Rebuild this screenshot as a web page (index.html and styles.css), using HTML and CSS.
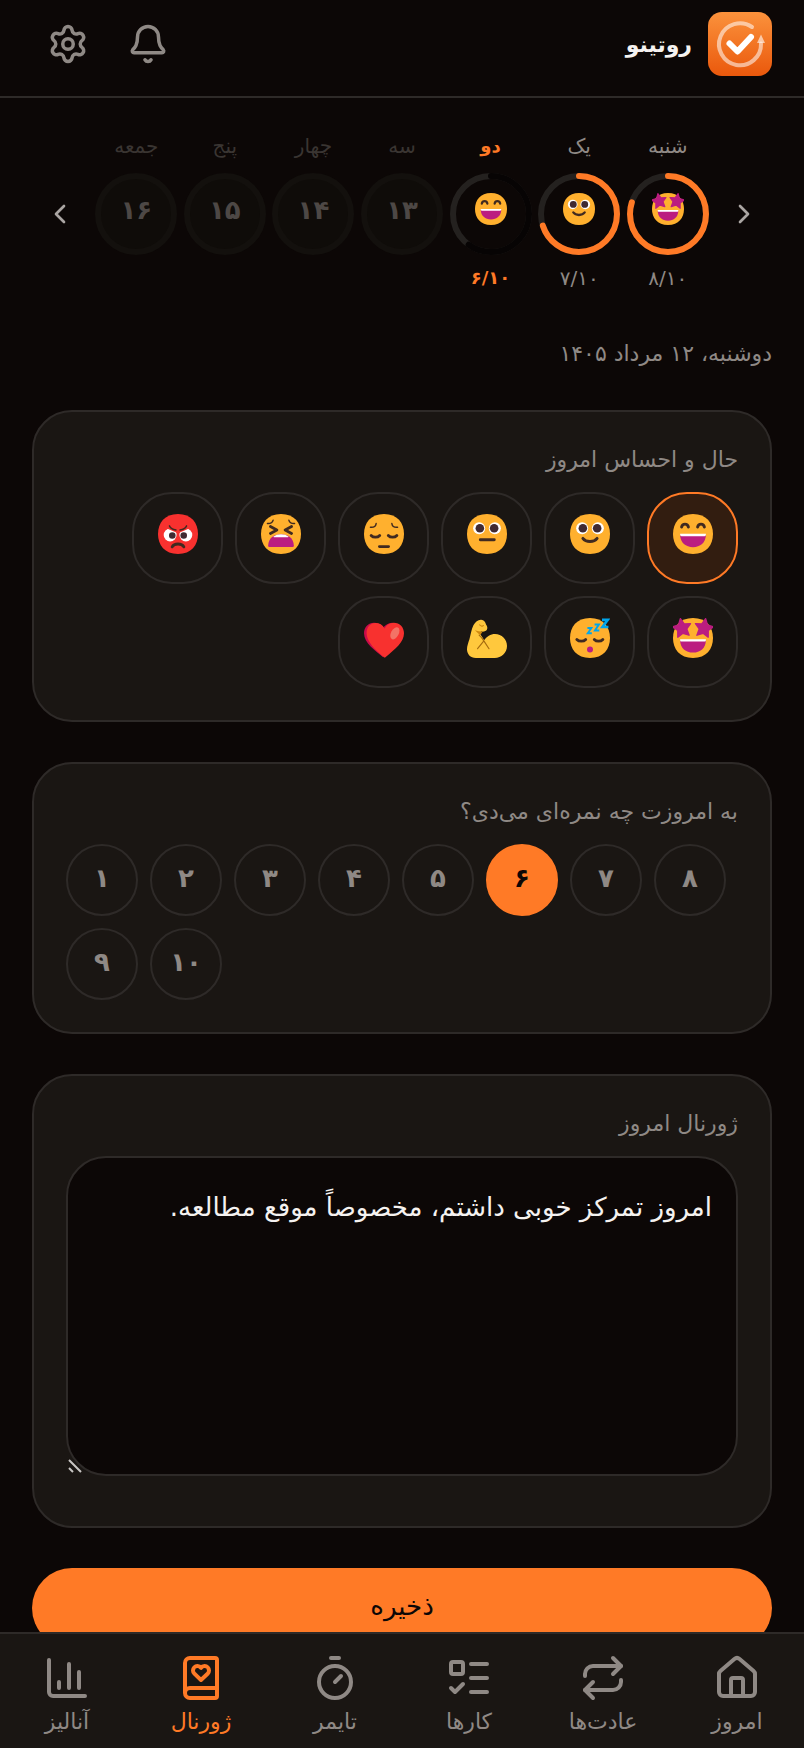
FILE: index.html
```html
<!DOCTYPE html>
<html lang="fa" dir="rtl">
<head>
<meta charset="utf-8">
<meta name="viewport" content="width=device-width, initial-scale=1">
<title>روتینو</title>
<link rel="stylesheet" href="styles.css">
</head>
<body>
<svg class="defs" aria-hidden="true">
  <defs>
    <path id="face" d="M16 30c9.330 0 14-6.270 14-14S25.330 2 16 2 2 8.270 2 16s4.660 14 14 14Z"/>
    <path id="star" d="M0-6.600 2-2.500 6.400-2 3.200 1.200 4 5.800 0 3.700-4 5.800-3.200 1.200-6.400-2-2-2.500Z" stroke="#bb1d80" stroke-linejoin="round"/>
    <g id="eyes-open">
      <circle cx="10.500" cy="12" r="4.200" fill="#fff"/><circle cx="21.500" cy="12" r="4.200" fill="#fff"/>
      <circle cx="11" cy="12" r="3" fill="#402a32"/><circle cx="21" cy="12" r="3" fill="#402a32"/>
    </g>
    <g id="laugh">
      <path fill="#bb1d80" d="M7 16.500h18c0 5.500-4 8.700-9 8.700s-9-3.200-9-8.700Z"/>
      <path fill="#fff" d="M7 15.900h18v.6c0 .6-.3 1-.9 1H7.900c-.6 0-.9-.4-.9-1Z"/>
    </g>
    <symbol id="e-grin" viewBox="2 2 28 28">
      <use href="#face" fill="#ffb02e"/>
      <path class="ink" d="M8 11.200c.6-2.800 4.200-2.800 4.800 0M19.200 11.200c.6-2.800 4.200-2.800 4.800 0"/>
      <use href="#laugh"/>
    </symbol>
    <symbol id="e-smile" viewBox="2 2 28 28">
      <use href="#face" fill="#ffb02e"/><use href="#eyes-open"/>
      <path class="ink" d="M11 19c2.200 3 7.800 3 10 0"/>
    </symbol>
    <symbol id="e-neutral" viewBox="2 2 28 28">
      <use href="#face" fill="#ffb02e"/><use href="#eyes-open"/>
      <path class="ink" d="M11.300 20h9.800"/>
    </symbol>
    <symbol id="e-pensive" viewBox="2 2 28 28">
      <use href="#face" fill="#ffb02e"/>
      <path class="ink thin" d="M6.500 11.300c2 .2 3.700-.8 4-2.600M25.500 11.300c-2 .2-3.700-.8-4-2.600"/>
      <path class="ink" d="M7 17c1.500 1.600 4.500 1.600 6 0M19 17c1.500 1.600 4.500 1.600 6 0M12.800 24.800h6.400"/>
    </symbol>
    <symbol id="e-tired" viewBox="2 2 28 28">
      <use href="#face" fill="#ffb02e"/>
      <path class="ink thin" d="M6.500 8.700c2 .1 3.600-.8 4-2.400M25.500 8.700c-2 .1-3.600-.8-4-2.400"/>
      <path class="ink" d="m8.600 10.800 4.500 2.400-4.500 2.400M23.400 10.800l-4.500 2.400 4.500 2.400"/>
      <path fill="#bb1d80" d="M7 24c.4-5.300 4-7.800 9-7.800s8.600 2.500 9 7.800c0 .8-.4 1.100-1 1.100H8c-.6 0-1-.3-1-1.100Z"/>
      <path fill="#fff" d="M10.600 17.900C12 16.800 14 16.200 16 16.200s4 .6 5.400 1.700c-.3.300-.6.400-1 .4h-8.800c-.4 0-.7-.1-1-.4Z"/>
    </symbol>
    <symbol id="e-angry" viewBox="2 2 28 28">
      <use href="#face" fill="#f8312f"/>
      <circle cx="10.500" cy="16.700" r="4.500" fill="#fff"/><circle cx="21.500" cy="16.700" r="4.500" fill="#fff"/>
      <path fill="#f8312f" d="m9 10 7 3.500 7-3.500v2.500L16 15.500 9 12.500Z"/>
      <circle cx="12" cy="17" r="2.300" fill="#402a32"/><circle cx="20" cy="17" r="2.300" fill="#402a32"/>
      <path class="ink thin" d="M10 10.300c.8 1.800 2.200 2.600 4.600 2.900M22 10.300c-.8 1.800-2.200 2.600-4.600 2.900"/>
      <path class="ink" d="M11.900 25c1.400-2.700 6.800-2.700 8.200 0"/>
    </symbol>
    <symbol id="e-star" viewBox="2 2 28 28" overflow="visible">
      <use href="#face" fill="#ffb02e"/>
      <use href="#star" fill="#bb1d80" transform="translate(8.300 9) rotate(-10)"/>
      <use href="#star" fill="#bb1d80" transform="translate(23.700 9) rotate(10)"/>
      <use href="#laugh" transform="translate(0 1)"/>
    </symbol>
    <symbol id="e-sleep" viewBox="2 2 28 28">
      <use href="#face" fill="#ffb02e"/>
      <path class="ink" d="M6.800 17c1.500 1.600 4.700 1.600 6.200 0M19 17c1.500 1.600 4.500 1.600 6 0"/>
      <circle cx="16" cy="24" r="2.100" fill="#bb1d80"/>
      <path fill="none" stroke="#00a6ed" stroke-width="1.300" d="M14.200 9h2.800l-2.600 3.700h2.900"/>
      <path fill="none" stroke="#00a6ed" stroke-width="1.400" d="M19.200 6.600h3l-2.700 4.100h3"/>
      <path fill="none" stroke="#00a6ed" stroke-width="1.800" d="M24.400 3.300h4l-3.700 5h4.200"/>
    </symbol>
    <symbol id="e-muscle" viewBox="2 2 28 28">
      <path fill="#ffc83d" d="M6.500 7C8 4.500 9.800 3 12 3.200c1.800.3 2.900 1.600 3.300 3.300.9 1 1.200 2.400.7 3.600-.6 1.300-2.400 1.700-4.200 1.400L11 13c1.200 1.500 2.200 3 3 4.600 1.700-2.600 4.500-4.400 7.600-4.400 4.700 0 8.400 3.700 8.400 8.400S26.100 30 21.400 30H8.200C4.300 30 2 27.200 2 23.900c0-2.400.9-4.600 1.700-7.100C4.700 13.400 5 9.800 6.500 7Z"/>
      <path fill="none" stroke="#a66c10" stroke-width=".8" stroke-linecap="round" d="M10.500 14c1.300 1.200 2.600 2.700 3.300 4l3.600 5.500M13.800 18l-4.400 5.500"/>
      <path fill="#d08a10" d="M7.500 10.500c1.800.6 3.500.9 5.500 1L11.200 14Z"/>
      <path fill="none" stroke="#d08a10" stroke-width=".8" stroke-linecap="round" d="m10.800 6.800 1.700 1.100 1-.6"/>
    </symbol>
    <symbol id="e-heart" viewBox="2 2 28 28">
      <path fill="#ca0b4a" d="M15.200 29.300C10 25 2 19.500 2 12.700 2 8.300 5 5.300 9 5.300c2.500 0 5 1.200 6.600 3.200 1.600-2 4-3.200 6.600-3.200Z"/>
      <path fill="#f8312f" d="M15.700 29.300C10 24.500 3.800 18.500 3.800 12.700c0-4.300 2.600-7.200 6.200-7.200 2.800 0 5 1.300 6.400 3.800 1.300-2.500 3.700-4 6.400-4 4.300 0 7.200 3.200 7.200 7.400 0 6.400-6.500 11.300-12.800 16.600-.5.500-1 .5-1.500 0Z"/>
      <ellipse cx="23.600" cy="12.700" rx="2.700" ry="4.600" fill="#f37366" transform="rotate(28 23.600 12.700)"/>
    </symbol>
    <linearGradient id="logo-bg" x1="0" y1="0" x2="0" y2="1">
      <stop offset="0" stop-color="#fb923c"/><stop offset="1" stop-color="#ea580c"/>
    </linearGradient>
  </defs>
</svg>

<div class="app">
  <header class="topbar">
    <a class="brand" href="#">
      <svg class="logo" viewBox="0 0 64 64" aria-hidden="true">
        <rect width="64" height="64" rx="14" fill="url(#logo-bg)"/>
        <path d="M53 31.500A21 21 0 1 1 44 15" fill="none" stroke="#fff" stroke-opacity=".55" stroke-width="4" stroke-linecap="round"/>
        <path d="m53 22.500 4 8.500h-8Z" fill="#fff" fill-opacity=".6"/>
        <path d="m21.500 31.500 8 8L43 25" fill="none" stroke="#fff" stroke-width="6" stroke-linecap="round" stroke-linejoin="round"/>
      </svg>
      <span>روتینو</span>
    </a>
    <div class="actions">
      <button class="icon-btn" type="button" aria-label="اعلان‌ها">
        <svg class="icon" viewBox="0 0 24 24"><path d="M10.268 21a2 2 0 0 0 3.464 0"/><path d="M3.262 15.326A1 1 0 0 0 4 17h16a1 1 0 0 0 .74-1.673C19.410 13.956 18 12.499 18 8A6 6 0 0 0 6 8c0 4.499-1.411 5.956-2.738 7.326"/></svg>
      </button>
      <button class="icon-btn" type="button" aria-label="تنظیمات">
        <svg class="icon" viewBox="0 0 24 24"><path d="M9.671 4.136a2.340 2.340 0 0 1 4.659 0 2.340 2.340 0 0 0 3.319 1.915 2.340 2.340 0 0 1 2.330 4.033 2.340 2.340 0 0 0 0 3.831 2.340 2.340 0 0 1-2.330 4.033 2.340 2.340 0 0 0-3.319 1.915 2.340 2.340 0 0 1-4.659 0 2.340 2.340 0 0 0-3.320-1.915 2.340 2.340 0 0 1-2.330-4.033 2.340 2.340 0 0 0 0-3.831A2.340 2.340 0 0 1 6.350 6.051a2.340 2.340 0 0 0 3.319-1.915"/><circle cx="12" cy="12" r="3"/></svg>
      </button>
    </div>
  </header>

  <main class="content">
    <nav class="week" aria-label="روزهای هفته">
      <button class="week-nav" type="button" aria-label="هفته قبل"><svg class="icon" viewBox="0 0 24 24"><path d="m9 18 6-6-6-6"/></svg></button>
      <div class="days">
        <button class="day" type="button">
          <span class="day-name">شنبه</span>
          <span class="ring"><svg class="ring-art" viewBox="0 0 82 82"><circle class="track" cx="41" cy="41" r="38"/><circle class="progress" cx="41" cy="41" r="38" pathLength="100" stroke-dasharray="80 100"/></svg><svg class="emoji"><use href="#e-star"/></svg></span>
          <span class="day-score">۸/۱۰</span>
        </button>
        <button class="day" type="button">
          <span class="day-name">یک</span>
          <span class="ring"><svg class="ring-art" viewBox="0 0 82 82"><circle class="track" cx="41" cy="41" r="38"/><circle class="progress" cx="41" cy="41" r="38" pathLength="100" stroke-dasharray="70 100"/></svg><svg class="emoji"><use href="#e-smile"/></svg></span>
          <span class="day-score">۷/۱۰</span>
        </button>
        <button class="day today" type="button" aria-current="date">
          <span class="day-name">دو</span>
          <span class="ring"><svg class="ring-art" viewBox="0 0 82 82"><circle class="track" cx="41" cy="41" r="38"/><circle class="progress" cx="41" cy="41" r="38" pathLength="100" stroke-dasharray="60 100"/></svg><svg class="emoji"><use href="#e-grin"/></svg></span>
          <span class="day-score">۶/۱۰</span>
        </button>
        <button class="day" type="button" disabled><span class="day-name">سه</span><span class="ring">۱۳</span></button>
        <button class="day" type="button" disabled><span class="day-name">چهار</span><span class="ring">۱۴</span></button>
        <button class="day" type="button" disabled><span class="day-name">پنج</span><span class="ring">۱۵</span></button>
        <button class="day" type="button" disabled><span class="day-name">جمعه</span><span class="ring">۱۶</span></button>
      </div>
      <button class="week-nav" type="button" aria-label="هفته بعد"><svg class="icon" viewBox="0 0 24 24"><path d="m15 18-6-6 6-6"/></svg></button>
    </nav>

    <p class="date">دوشنبه، ۱۲ مرداد ۱۴۰۵</p>

    <section class="card">
      <h2 class="card-title">حال و احساس امروز</h2>
      <div class="moods">
        <button class="mood selected" type="button" aria-pressed="true" aria-label="خوشحال"><svg class="emoji"><use href="#e-grin"/></svg></button>
        <button class="mood" type="button" aria-pressed="false" aria-label="خوب"><svg class="emoji"><use href="#e-smile"/></svg></button>
        <button class="mood" type="button" aria-pressed="false" aria-label="معمولی"><svg class="emoji"><use href="#e-neutral"/></svg></button>
        <button class="mood" type="button" aria-pressed="false" aria-label="غمگین"><svg class="emoji"><use href="#e-pensive"/></svg></button>
        <button class="mood" type="button" aria-pressed="false" aria-label="خسته"><svg class="emoji"><use href="#e-tired"/></svg></button>
        <button class="mood" type="button" aria-pressed="false" aria-label="عصبانی"><svg class="emoji"><use href="#e-angry"/></svg></button>
        <button class="mood" type="button" aria-pressed="false" aria-label="هیجان‌زده"><svg class="emoji"><use href="#e-star"/></svg></button>
        <button class="mood" type="button" aria-pressed="false" aria-label="خواب‌آلود"><svg class="emoji"><use href="#e-sleep"/></svg></button>
        <button class="mood" type="button" aria-pressed="false" aria-label="قوی"><svg class="emoji"><use href="#e-muscle"/></svg></button>
        <button class="mood" type="button" aria-pressed="false" aria-label="عاشق"><svg class="emoji"><use href="#e-heart"/></svg></button>
      </div>
    </section>

    <section class="card">
      <h2 class="card-title">به امروزت چه نمره‌ای می‌دی؟</h2>
      <div class="scores" dir="ltr">
        <button class="score" type="button">۱</button>
        <button class="score" type="button">۲</button>
        <button class="score" type="button">۳</button>
        <button class="score" type="button">۴</button>
        <button class="score" type="button">۵</button>
        <button class="score selected" type="button" aria-pressed="true">۶</button>
        <button class="score" type="button">۷</button>
        <button class="score" type="button">۸</button>
        <button class="score" type="button">۹</button>
        <button class="score" type="button">۱۰</button>
      </div>
    </section>

    <section class="card">
      <label class="card-title" for="journal">ژورنال امروز</label>
      <div class="journal-box">
        <textarea class="journal" id="journal">امروز تمرکز خوبی داشتم، مخصوصاً موقع مطالعه.</textarea>
        <svg class="grip" viewBox="0 0 14 14" aria-hidden="true"><path d="m1 1 12 12M1 9l4 4"/></svg>
      </div>
    </section>

    <button class="save" type="button">ذخیره</button>
  </main>

  <nav class="tabs" aria-label="منوی اصلی">
    <a class="tab" href="#"><svg class="icon" viewBox="0 0 24 24"><path d="M15 21v-8a1 1 0 0 0-1-1h-4a1 1 0 0 0-1 1v8"/><path d="M3 10a2 2 0 0 1 .709-1.528l7-6a2 2 0 0 1 2.582 0l7 6A2 2 0 0 1 21 10v9a2 2 0 0 1-2 2H5a2 2 0 0 1-2-2z"/></svg><span>امروز</span></a>
    <a class="tab" href="#"><svg class="icon" viewBox="0 0 24 24"><path d="m17 2 4 4-4 4"/><path d="M3 11v-1a4 4 0 0 1 4-4h14"/><path d="m7 22-4-4 4-4"/><path d="M21 13v1a4 4 0 0 1-4 4H3"/></svg><span>عادت‌ها</span></a>
    <a class="tab" href="#"><svg class="icon" viewBox="0 0 24 24"><path d="M13 5h8M13 12h8M13 19h8M3 17l2 2 4-4"/><rect x="3" y="4" width="6" height="6" rx="1"/></svg><span>کارها</span></a>
    <a class="tab" href="#"><svg class="icon" viewBox="0 0 24 24"><path d="M10 2h4M12 14l3-3"/><circle cx="12" cy="14" r="8"/></svg><span>تایمر</span></a>
    <a class="tab active" href="#" aria-current="page"><svg class="icon" viewBox="0 0 24 24"><path d="M16 8.200A2.220 2.220 0 0 0 13.800 6c-.8 0-1.400.3-1.800.9-.4-.6-1-.9-1.800-.9A2.220 2.220 0 0 0 8 8.200c0 .6.3 1.200.7 1.600A226.652 226.652 0 0 0 12 13a404 404 0 0 0 3.300-3.100 2.413 2.413 0 0 0 .7-1.700"/><path d="M4 19.500v-15A2.500 2.500 0 0 1 6.500 2H19a1 1 0 0 1 1 1v18a1 1 0 0 1-1 1H6.500a1 1 0 0 1 0-5H20"/></svg><span>ژورنال</span></a>
    <a class="tab" href="#"><svg class="icon" viewBox="0 0 24 24"><path d="M3 3v16a2 2 0 0 0 2 2h16M18 17V9M13 17V5M8 17v-3"/></svg><span>آنالیز</span></a>
  </nav>
</div>
</body>
</html>
```
FILE: styles.css
```css
:root {
  --bg: #0c0706;
  --surface: #1a1613;
  --line: #2e2a28;
  --text: #f5f2f0;
  --muted: #8f8985;
  --accent: #ff7a26;
}

* {
  box-sizing: border-box;
}

body {
  margin: 0;
  background: var(--bg);
  color: var(--text);
  font-family: "DejaVu Sans", sans-serif;
  font-size: 22px;
}

button,
textarea {
  font: inherit;
  color: inherit;
}

button {
  padding: 0;
  border: 0;
  background: none;
  cursor: pointer;
}

a {
  color: inherit;
  text-decoration: none;
}

.defs {
  position: absolute;
  width: 0;
  height: 0;
}

.ink {
  fill: none;
  stroke: #402a20;
  stroke-width: 2;
  stroke-linecap: round;
  stroke-linejoin: round;
}

.ink.thin {
  stroke-width: 1px;
}

.icon {
  width: 42px;
  height: 42px;
  fill: none;
  stroke: currentColor;
  stroke-width: 2;
  stroke-linecap: round;
  stroke-linejoin: round;
}

.app {
  display: flex;
  flex-direction: column;
  height: 100vh;
}

.topbar {
  display: flex;
  flex: none;
  align-items: center;
  justify-content: space-between;
  padding: 12px 32px 20px;
  border-bottom: 2px solid var(--line);
}

.brand {
  display: flex;
  align-items: center;
  gap: 16px;
  font-size: 22px;
  font-weight: 700;
}

.logo {
  width: 64px;
  height: 64px;
}

.actions {
  display: flex;
  gap: 8px;
}

.icon-btn {
  display: grid;
  place-items: center;
  width: 72px;
  height: 64px;
  color: var(--muted);
}

.content {
  flex: 1;
  min-height: 0;
  overflow-y: auto;
  scrollbar-width: none;
  padding: 32px 32px 40px;
}

.week {
  display: flex;
  gap: 4px;
  margin-bottom: 38px;
}

.week-nav {
  display: grid;
  place-items: center;
  width: 56px;
  height: 72px;
  margin-top: 48px;
  color: #aaa5a2;
}

.week-nav .icon {
  width: 32px;
  height: 32px;
}

.days {
  display: grid;
  flex: 1;
  grid-template-columns: repeat(7, 1fr);
}

.day {
  display: flex;
  flex-direction: column;
  align-items: center;
  min-height: 170px;
  color: var(--muted);
}

.day-name,
.day-score {
  font-size: 20px;
  line-height: 32px;
}

.day-name {
  margin-bottom: 11px;
}

.day-score {
  margin-top: 7px;
}

.ring {
  display: grid;
  place-items: center;
  width: 82px;
  height: 82px;
  padding-bottom: 10px;
  border-radius: 50%;
  font-size: 26px;
  font-weight: 700;
}

.ring > * {
  grid-area: 1 / 1;
}

.ring-art {
  width: 82px;
  height: 82px;
  margin-bottom: -10px;
  transform: rotate(-90deg);
}

.track,
.progress {
  fill: none;
  stroke: #24211f;
  stroke-width: 6;
}

.progress {
  stroke: var(--accent);
  stroke-linecap: round;
}

.ring .emoji {
  width: 32px;
  height: 32px;
}

.today {
  color: var(--accent);
}

.today .day-name,
.today .day-score {
  font-size: 18px;
  font-weight: 700;
}

.today .progress {
  stroke: #070404;
}

.day:disabled {
  color: #3a3532;
}

.day:disabled .ring {
  padding-bottom: 8px;
  border: 6px solid #13100d;
  background: #0f0c09;
  color: #4d4845;
}

.date {
  margin: 0 0 40px;
  color: var(--muted);
  font-size: 22px;
  line-height: 32px;
}

.card {
  margin-bottom: 40px;
  padding: 32px;
  border: 2px solid var(--line);
  border-radius: 40px;
  background: var(--surface);
}

.card-title {
  display: block;
  margin: 0 0 16px;
  color: var(--muted);
  font-size: 22px;
  font-weight: 400;
  line-height: 32px;
}

.moods,
.scores {
  display: flex;
  flex-wrap: wrap;
  gap: 12px;
}

.mood {
  display: grid;
  place-items: center;
  width: 91px;
  height: 92px;
  padding-bottom: 8px;
  border: 2px solid var(--line);
  border-radius: 40px;
}

.mood .emoji {
  width: 40px;
  height: 40px;
}

.mood.selected {
  border-color: var(--accent);
  background: #321d10;
}

.score {
  width: 72px;
  height: 72px;
  padding-bottom: 4px;
  border: 2px solid var(--line);
  border-radius: 50%;
  color: var(--muted);
  font-size: 26px;
  font-weight: 700;
}

.score.selected {
  border-color: var(--accent);
  background: var(--accent);
  color: #0c0706;
}

.journal-box {
  position: relative;
  padding-bottom: 18px;
}

.journal {
  display: block;
  width: 100%;
  height: 320px;
  padding: 24px;
  border: 2px solid var(--line);
  border-radius: 40px;
  outline: 0;
  background: var(--bg);
  color: var(--text);
  font-size: 26px;
  line-height: 50px;
  resize: vertical;
}

.journal::-webkit-resizer {
  background: transparent;
}

.grip {
  position: absolute;
  bottom: 21px;
  left: 2px;
  width: 14px;
  height: 14px;
  fill: none;
  stroke: #c9c6c4;
  stroke-width: 2;
  pointer-events: none;
}

.save {
  display: block;
  width: 100%;
  height: 80px;
  padding-bottom: 4px;
  border-radius: 40px;
  background: var(--accent);
  color: #0c0706;
  font-size: 26px;
}

.tabs {
  display: grid;
  flex: none;
  grid-template-columns: repeat(6, 1fr);
  padding: 20px 0 10px;
  border-top: 2px solid var(--line);
  background: var(--surface);
}

.tab {
  display: flex;
  flex-direction: column;
  align-items: center;
  gap: 4px;
  color: var(--muted);
  font-size: 22px;
  line-height: 32px;
}

.tab .icon {
  width: 48px;
  height: 48px;
}

.tab.active {
  color: var(--accent);
}
```
